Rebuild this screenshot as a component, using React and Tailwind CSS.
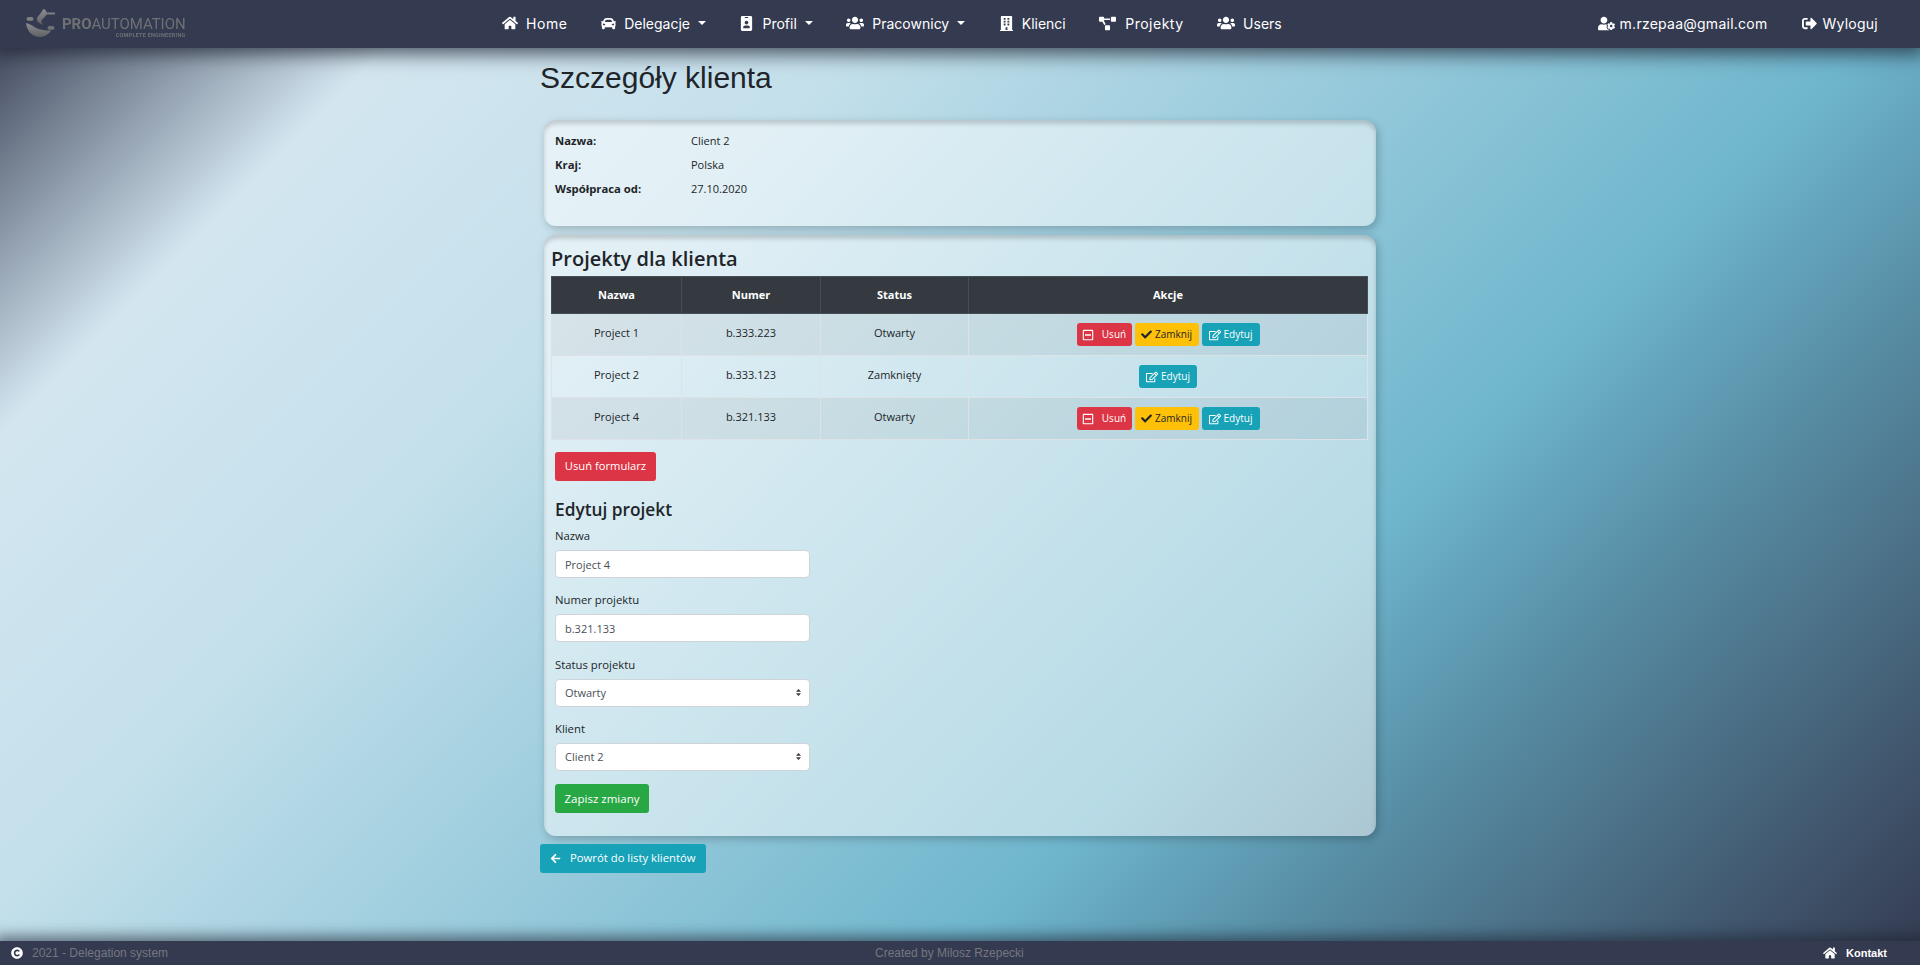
import { FaHome, FaCar, FaIdBadge, FaUsers, FaBuilding, FaProjectDiagram, FaUserCog, FaSignOutAlt, FaRegEdit, FaCheck, FaRegMinusSquare, FaArrowLeft, FaCopyright } from 'react-icons/fa'

const navItems = [
  { label: 'Home', icon: FaHome, size: 'text-[16px]', text: 'tracking-[0.6px]' },
  { label: 'Delegacje', icon: FaCar, size: 'text-[15px]', caret: true },
  { label: 'Profil', icon: FaIdBadge, size: 'text-[15px]', caret: true },
  { label: 'Pracownicy', icon: FaUsers, size: 'text-[18px]', caret: true },
  { label: 'Klienci', icon: FaBuilding, size: 'text-[15px]' },
  { label: 'Projekty', icon: FaProjectDiagram, size: 'text-[17px]', text: 'tracking-[0.5px] ml-[1px]' },
  { label: 'Users', icon: FaUsers, size: 'text-[18px]' },
]

const projects = [
  { name: 'Project 1', number: 'b.333.223', status: 'Otwarty', open: true },
  { name: 'Project 2', number: 'b.333.123', status: 'Zamknięty', open: false },
  { name: 'Project 4', number: 'b.321.133', status: 'Otwarty', open: true },
]

const cardShadow = 'shadow-[inset_0_4px_4px_rgba(0,0,0,0.16),2px_3px_8px_rgba(0,0,0,0.22)]'

function Logo() {
  return (
    <div className="flex items-start">
      <svg width="29" height="28" viewBox="0 0 29 28">
        <defs>
          <linearGradient id="lg" x1="0" y1="0" x2="0" y2="1">
            <stop offset="0" stopColor="#8a8c90" />
            <stop offset="1" stopColor="#5f6165" />
          </linearGradient>
        </defs>
        <path d="M17 0c2.500.5 3.500 1.800 3.500 3.500H29v2h-8.500c-1 2.700-4 3.700-5 6-.8 2 .5 3.200 2.500 4.200-2-.5-6-1.500-7-4.500C10 7.500 15.500 5 17 0z" fill="url(#lg)" />
        <rect x="0.500" y="8" width="7" height="3.800" rx="1.900" fill="#7d7f83" />
        <rect x="21.500" y="17" width="7" height="3.800" rx="1.900" fill="#6f7175" />
        <path d="M0 14c4.500 1 7 3 10 5 4.500 2 10 2.500 15 2.500-2.500 4-7 6.500-11.500 6.500C6 28 .5 21 0 14z" fill="url(#lg)" />
      </svg>
      <div className="ml-[7px] mt-[8px] flex flex-col items-end blur-[0.3px] font-['Roboto',sans-serif] text-[#6f7175]">
        <div className="text-[15px] leading-[15px] tracking-[-0.05px] whitespace-nowrap">
          <span className="font-bold">PRO</span>AUTOMATION
        </div>
        <div className="text-[5.500px] leading-[6px] font-bold tracking-[0.25px] whitespace-nowrap">COMPLETE ENGINEERING</div>
      </div>
    </div>
  )
}

function Navbar() {
  return (
    <nav className="relative z-10 flex h-[48px] shrink-0 items-center bg-[#343a50] pb-[2px] shadow-[0_0_18px_6px_rgba(30,35,50,0.75)] font-['Inter',sans-serif] text-[14px] text-white">
      <div className="w-[502px] pl-[26px]">
        <Logo />
      </div>
      <div className="flex items-center gap-[33.500px]">
        {navItems.map(item => (
          <div key={item.label} className="flex items-center gap-[8px]">
            <item.icon className={item.size} />
            <span className={item.text}>{item.label}</span>
            {item.caret && <span className="h-0 w-0 border-x-[4px] border-t-[4.500px] border-x-transparent border-t-white" />}
          </div>
        ))}
      </div>
      <div className="ml-auto flex items-center gap-[35px] pr-[42px] tracking-[0.25px]">
        <div className="flex items-center gap-[5px]">
          <FaUserCog className="text-[17px]" />
          <span>m.rzepaa@gmail.com</span>
        </div>
        <div className="flex items-center gap-[5px]">
          <FaSignOutAlt className="text-[15px]" />
          <span>Wyloguj</span>
        </div>
      </div>
    </nav>
  )
}

function ActionButton({ color, icon: Icon, label, layout, iconSize }) {
  return (
    <button className={`flex h-[23px] items-center justify-center rounded-[3px] text-[10px] ${layout} ${color}`}>
      <Icon className={iconSize} />
      {label}
    </button>
  )
}

function ProjectsTable() {
  return (
    <table className="w-full table-fixed border-collapse text-center text-[11px] text-[#212529]">
      <thead>
        <tr className="h-[37px] bg-[#343a40] text-white">
          <th className="w-[130px] border border-[#454d55] font-bold">Nazwa</th>
          <th className="w-[139px] border border-[#454d55] font-bold">Numer</th>
          <th className="w-[148px] border border-[#454d55] font-bold">Status</th>
          <th className="border border-[#454d55] font-bold">Akcje</th>
        </tr>
      </thead>
      <tbody>
        {projects.map((p, i) => (
          <tr key={p.name} className={`h-[42px] ${i % 2 === 0 ? 'bg-black/5' : ''}`}>
            <td className="border border-[#dee2e6] pb-[2px]">{p.name}</td>
            <td className="border border-[#dee2e6] pb-[2px]">{p.number}</td>
            <td className="border border-[#dee2e6] pb-[2px]">{p.status}</td>
            <td className="border border-[#dee2e6]">
              <div className="flex justify-center gap-[3px]">
                {p.open && <ActionButton color="bg-[#dc3545] text-white" icon={FaRegMinusSquare} label="Usuń" layout="w-[55px] gap-[8px]" iconSize="text-[12px]" />}
                {p.open && <ActionButton color="bg-[#ffc107] text-[#212529]" icon={FaCheck} label="Zamknij" layout="w-[64px] gap-[3px]" iconSize="text-[11px]" />}
                <ActionButton color="bg-[#17a2b8] text-white" icon={FaRegEdit} label="Edytuj" layout="w-[58px] gap-[3px]" iconSize="text-[12px]" />
              </div>
            </td>
          </tr>
        ))}
      </tbody>
    </table>
  )
}

function Field({ label, value }) {
  return (
    <div className="mb-[14.400px] w-[255px]">
      <label className="mb-[6px] block text-[11.300px] leading-[16px] text-[#212529]">{label}</label>
      <input
        defaultValue={value}
        className="block h-[28px] w-full rounded-[4px] border border-[#ced4da] bg-white px-[9px] text-[11px] text-[#495057] outline-none"
      />
    </div>
  )
}

function SelectField({ label, options, className = 'mb-[14.400px]' }) {
  return (
    <div className={`w-[255px] ${className}`}>
      <label className="mb-[6px] block text-[11.300px] leading-[16px] text-[#212529]">{label}</label>
      <div className="relative">
        <select className="block h-[28px] w-full appearance-none rounded-[4px] border border-[#ced4da] bg-white px-[9px] pt-[1px] text-[11px] text-[#495057] outline-none">
          {options.map(o => <option key={o}>{o}</option>)}
        </select>
        <svg className="pointer-events-none absolute right-[9px] top-[10px]" width="5" height="7" viewBox="0 0 5 7">
          <path d="M2.500 0 5 2.800H0zM0 4.200h5L2.500 7z" fill="#343a40" />
        </svg>
      </div>
    </div>
  )
}

function Footer() {
  return (
    <footer className="relative z-10 flex h-[24px] shrink-0 items-center bg-[#343a50] pl-[11px] pr-[33px] shadow-[0_0_14px_5px_rgba(30,35,50,0.6)] font-['Liberation_Sans',sans-serif] text-[12px] text-[#74777f]">
      <div className="flex w-[864px] items-center gap-[9px]">
        <FaCopyright className="text-[12px] text-white" />
        <span>2021 - Delegation system</span>
      </div>
      <span>Created by Milosz Rzepecki</span>
      <div className="ml-auto flex items-center gap-[9px] text-[11px] font-bold text-white">
        <FaHome className="text-[14px]" />
        <span>Kontakt</span>
      </div>
    </footer>
  )
}

export default function App() {
  return (
    <div className="flex h-screen flex-col overflow-hidden bg-[linear-gradient(135deg,#343a50_0%,#d3e6f0_15%,#c4e0eb_31%,#6fb6cd_66%,#5a94ab_75%,#343a50_100%)] font-['Open_Sans',sans-serif]">
      <Navbar />
      <main className="flex-1">
        <div className="mx-auto w-[840px]">
          <h1 className="mt-[12px] font-['Liberation_Sans',sans-serif] text-[30px] leading-[36px] text-[#212529]">Szczegóły klienta</h1>

          <section className={`mx-[4px] mt-[24px] h-[106px] rounded-[12px] bg-white/50 pl-[11px] pt-[9px] text-[11px] text-[#212529] ${cardShadow}`}>
            {[['Nazwa:', 'Client 2'], ['Kraj:', 'Polska'], ['Współpraca od:', '27.10.2020']].map(([k, v]) => (
              <div key={k} className="flex h-[24px] items-center">
                <span className="w-[136px] text-[11.300px] font-bold">{k}</span>
                <span>{v}</span>
              </div>
            ))}
          </section>

          <section className={`mx-[4px] mt-[9px] h-[601px] rounded-[12px] bg-white/50 pl-[7px] pr-[8px] pt-[12px] ${cardShadow}`}>
            <h2 className="mb-[5px] text-[20px] font-semibold leading-[24px] text-[#212529]">Projekty dla klienta</h2>
            <ProjectsTable />
            <div className="pl-[4px]">
              <button className="mt-[12px] block h-[29px] w-[101px] rounded-[3px] bg-[#dc3545] text-[11.200px] text-white">Usuń formularz</button>
              <h3 className="mb-[7px] mt-[18px] text-[17.300px] font-semibold leading-[22px] text-[#212529]">Edytuj projekt</h3>
              <Field label="Nazwa" value="Project 4" />
              <Field label="Numer projektu" value="b.321.133" />
              <SelectField label="Status projektu" options={['Otwarty', 'Zamknięty']} />
              <SelectField label="Klient" options={['Client 2', 'Client 1']} className="mb-[13px]" />
              <button className="block h-[29px] w-[94px] rounded-[3px] bg-[#28a745] text-[11.500px] text-white">Zapisz zmiany</button>
            </div>
          </section>

          <button className="mt-[8px] flex h-[29px] w-[166px] items-center gap-[9px] rounded-[3px] bg-[#17a2b8] pl-[10px] text-[11.300px] text-white">
            <FaArrowLeft className="text-[11px]" />
            Powrót do listy klientów
          </button>
        </div>
      </main>
      <Footer />
    </div>
  )
}
